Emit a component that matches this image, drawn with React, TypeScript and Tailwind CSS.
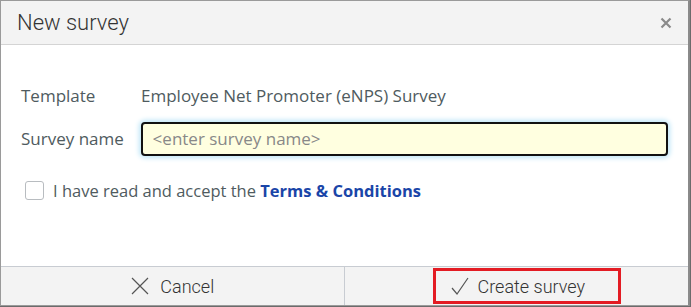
import { useState } from "react";

export default function App() {
  const [name, setName] = useState("");
  const [accepted, setAccepted] = useState(false);

  return (
    <div className="h-[307px] w-[691px] bg-[#6b6b6b] font-['Open_Sans',sans-serif]">
      <div className="flex h-[306px] w-[690px] flex-col border border-[#9a9a9a] border-r-2 border-r-[#8a8a8a] bg-white">
        <div className="flex h-[44px] items-center justify-between border-b border-[#d4d4d4] bg-[#f3f3f3] pl-[16px] pr-[16px]">
          <h2 className="font-['Roboto',sans-serif] text-[22px] font-light text-[#333]">
            New survey
          </h2>
          <button className="text-[#8a8a8a]">
            <svg width="12" height="12" viewBox="0 0 12 12">
              <path d="M1.5 1.5 L10.5 10.5 M10.5 1.5 L1.5 10.5" stroke="currentColor" strokeWidth="2.2" />
            </svg>
          </button>
        </div>

        <div className="flex flex-1 flex-col px-[20px] pt-[38px]">
          <div className="flex items-center text-[17px] text-[#4f5b60]">
            <span className="w-[120px]">Template</span>
            <span>Employee Net Promoter (eNPS) Survey</span>
          </div>

          <div className="mt-[13px] flex items-center text-[17px] text-[#4f5b60]">
            <label className="w-[120px]">Survey name</label>
            <input
              type="text"
              value={name}
              onChange={(e) => setName(e.target.value)}
              placeholder="<enter survey name>"
              className="h-[34px] w-[529px] rounded-[4px] border-2 border-[#111] bg-[#ffffe0] px-[10px] text-[17px] text-[#333] shadow-[0_0_5px_2px_#bfe6f7] outline-none placeholder:text-[#888]"
            />
          </div>

          <label className="mt-[23px] flex items-center gap-[9px] pl-[4px] text-[16.5px] text-[#4f5b60]">
            <input
              type="checkbox"
              checked={accepted}
              onChange={(e) => setAccepted(e.target.checked)}
              className="h-[19px] w-[19px] appearance-none rounded-[3px] border border-[#b8bcc0] bg-white"
            />
            <span>
              I have read and accept the{" "}
              <a className="font-bold text-[#1a45a8]">Terms &amp; Conditions</a>
            </span>
          </label>
        </div>

        <div className="grid h-[39px] grid-cols-2 border-t border-[#c8ccd2] bg-[#f3f3f3] font-['Roboto',sans-serif] text-[18px] font-light text-[#333]">
          <button className="flex items-center justify-center gap-[10px] border-r border-[#c8ccd2]">
            <svg width="20" height="20" viewBox="0 0 20 20">
              <path d="M2 2 L18 18 M18 2 L2 18" stroke="#555" strokeWidth="1.2" />
            </svg>
            Cancel
          </button>
          <div className="flex items-center pl-[88px]">
            <button className="flex h-[36px] w-[188px] items-center gap-[8px] border-[3px] border-[#e31b23] pl-[14px]">
              <svg width="20" height="20" viewBox="0 0 20 20">
                <path d="M2 12 L7 18 L18 2" fill="none" stroke="#555" strokeWidth="1.2" />
              </svg>
              Create survey
            </button>
          </div>
        </div>
      </div>
    </div>
  );
}
